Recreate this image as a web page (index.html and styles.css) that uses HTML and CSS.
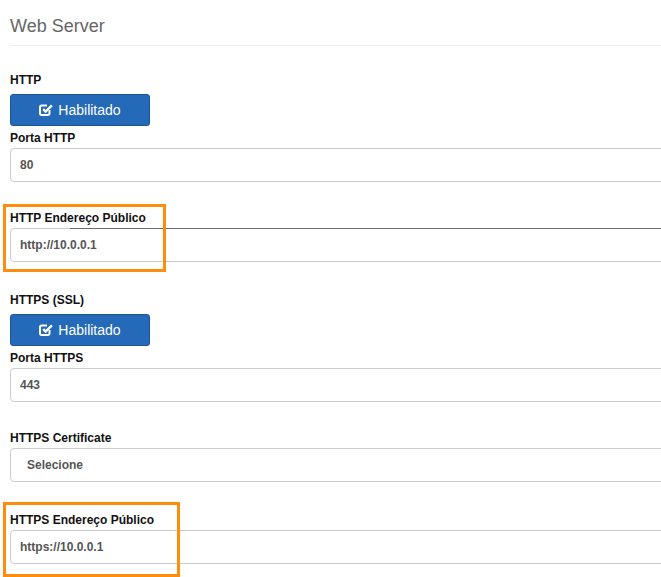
FILE: index.html
```html
<!DOCTYPE html>
<html lang="pt">
<head>
<meta charset="utf-8">
<title>Web Server</title>
<link rel="stylesheet" href="styles.css">
</head>
<body>
<div class="page">
  <h3 class="title">Web Server</h3>
  <hr class="rule">

  <div class="group toggle">
    <label class="lbl">HTTP</label>
    <button class="btn-on" type="button">
      <svg class="chk" viewBox="0 0 14 13" width="14" height="13" aria-hidden="true">
        <path d="M10.5 7v3.3a1.7 1.7 0 0 1-1.7 1.7H2.7A1.7 1.7 0 0 1 1 10.3V4.2a1.7 1.7 0 0 1 1.7-1.7H8" fill="none" stroke="#fff" stroke-width="2"/>
        <path d="M4.2 6.2l2.4 2.4 6.3-6.3" fill="none" stroke="#fff" stroke-width="2.4"/>
      </svg>
      <span>Habilitado</span>
    </button>
  </div>

  <div class="group field">
    <label class="lbl">Porta HTTP</label>
    <input class="ctl" type="text" value="80">
  </div>

  <div class="group field mark">
    <label class="lbl">HTTP Endereço Público</label>
    <input class="ctl" type="text" value="http://10.0.0.1">
    <span class="dark-top"></span>
    <span class="note note-1"></span>
  </div>

  <div class="group toggle second">
    <label class="lbl">HTTPS (SSL)</label>
    <button class="btn-on" type="button">
      <svg class="chk" viewBox="0 0 14 13" width="14" height="13" aria-hidden="true">
        <path d="M10.5 7v3.3a1.7 1.7 0 0 1-1.7 1.7H2.7A1.7 1.7 0 0 1 1 10.3V4.2a1.7 1.7 0 0 1 1.7-1.7H8" fill="none" stroke="#fff" stroke-width="2"/>
        <path d="M4.2 6.2l2.4 2.4 6.3-6.3" fill="none" stroke="#fff" stroke-width="2.4"/>
      </svg>
      <span>Habilitado</span>
    </button>
  </div>

  <div class="group field">
    <label class="lbl">Porta HTTPS</label>
    <input class="ctl" type="text" value="443">
  </div>

  <div class="group field wide">
    <label class="lbl">HTTPS Certificate</label>
    <select class="ctl sel">
      <option>Selecione</option>
    </select>
  </div>

  <div class="group field mark">
    <label class="lbl">HTTPS Endereço Público</label>
    <input class="ctl" type="text" value="https://10.0.0.1">
    <span class="note note-2"></span>
  </div>
</div>
</body>
</html>
```

FILE: styles.css
```css
html, body {
  margin: 0;
  padding: 0;
  overflow: hidden;
  background: #fff;
}

body {
  font-family: "Liberation Sans", Arial, Helvetica, sans-serif;
  color: #222;
}

.page {
  width: 700px;
  padding-left: 10px;
}

.title {
  margin: 16px 0 0;
  font-size: 18px;
  line-height: 20px;
  font-weight: normal;
  color: #666;
}

.rule {
  margin: 9px 0 26px;
  border: 0;
  border-top: 1px solid #eee;
  height: 0;
}

.group {
  position: relative;
}

.lbl {
  display: block;
  font-size: 12px;
  line-height: 17px;
  font-weight: bold;
  color: #111;
}

.toggle {
  margin-bottom: 4px;
}

.toggle .lbl {
  margin-bottom: 5px;
}

.toggle.second {
  padding-top: 2px;
}

.btn-on {
  display: flex;
  align-items: center;
  justify-content: center;
  gap: 5px;
  width: 140px;
  height: 32px;
  padding: 0;
  margin: 0;
  border: 1px solid #1c5597;
  border-radius: 3px;
  background: #2569b9;
  color: #fff;
  font-family: inherit;
  font-size: 14px;
  line-height: 16px;
}

.chk {
  display: block;
  margin-top: -1px;
}

.field {
  margin-bottom: 28px;
}

.field.wide {
  margin-bottom: 30px;
}

.field .lbl {
  margin-bottom: 1px;
}

.ctl {
  display: block;
  box-sizing: border-box;
  width: 690px;
  height: 34px;
  margin: 0;
  padding: 0 9px;
  border: 1px solid #ccc;
  border-radius: 4px;
  background: #fff;
  font-family: inherit;
  font-size: 12px;
  font-weight: bold;
  color: #555;
  outline: none;
}

.sel {
  -webkit-appearance: none;
  appearance: none;
  padding-left: 16px;
}

.dark-top {
  position: absolute;
  left: 60px;
  right: 0;
  top: 18px;
  height: 1px;
  background: #6b6b6b;
}

.note {
  position: absolute;
  box-sizing: border-box;
  border: 3px solid #ff8b0f;
  left: -7px;
  pointer-events: none;
}

.note-1 {
  top: -6px;
  width: 163px;
  height: 68px;
}

.note-2 {
  top: -10px;
  width: 177px;
  height: 75px;
}
```
